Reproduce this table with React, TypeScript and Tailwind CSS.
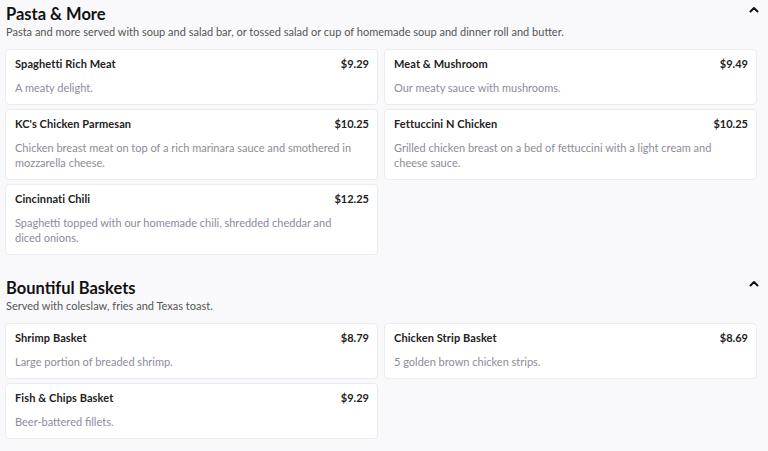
import React from 'react';

interface MenuItem {
    name: string;
    price: string;
    description: string;
}

interface MenuSection {
    title: string;
    subtitle: string;
    items: MenuItem[];
}

const sections: MenuSection[] = [
    {
        title: 'Pasta & More',
        subtitle: 'Pasta and more served with soup and salad bar, or tossed salad or cup of homemade soup and dinner roll and butter.',
        items: [
            { name: 'Spaghetti Rich Meat', price: '$9.29', description: 'A meaty delight.' },
            { name: 'Meat & Mushroom', price: '$9.49', description: 'Our meaty sauce with mushrooms.' },
            { name: "KC's Chicken Parmesan", price: '$10.25', description: 'Chicken breast meat on top of a rich marinara sauce and smothered in mozzarella cheese.' },
            { name: 'Fettuccini N Chicken', price: '$10.25', description: 'Grilled chicken breast on a bed of fettuccini with a light cream and cheese sauce.' },
            { name: 'Cincinnati Chili', price: '$12.25', description: 'Spaghetti topped with our homemade chili, shredded cheddar and diced onions.' },
        ],
    },
    {
        title: 'Bountiful Baskets',
        subtitle: 'Served with coleslaw, fries and Texas toast.',
        items: [
            { name: 'Shrimp Basket', price: '$8.79', description: 'Large portion of breaded shrimp.' },
            { name: 'Chicken Strip Basket', price: '$8.69', description: '5 golden brown chicken strips.' },
            { name: 'Fish & Chips Basket', price: '$9.29', description: 'Beer-battered fillets.' },
        ],
    },
];

const ChevronUp: React.FC = () => (
    <svg width="10" height="8" viewBox="0 0 10 8" fill="none" className="mt-[2px] -mr-[2px]">
        <path d="M1.5 5.5L5 2L8.5 5.5" stroke="#111" strokeWidth="2" strokeLinecap="round" strokeLinejoin="round" />
    </svg>
);

const ItemCard: React.FC<{ item: MenuItem }> = ({ item }) => (
    <div className="bg-white border border-[#ebebf2] rounded-[4px] pl-[9px] pr-[8px] pt-[8px] pb-[9px]">
        <div className="flex justify-between items-center leading-[12px]">
            <span className="text-[11px] font-bold text-[#222] tracking-[0.1px]">{item.name}</span>
            <span className="text-[11px] font-bold text-[#222]">{item.price}</span>
        </div>
        <p className="mt-[10px] text-[11px] leading-[15px] text-[#8d8b9c] pr-[12px]">{item.description}</p>
    </div>
);

const Section: React.FC<{ section: MenuSection }> = ({ section }) => (
    <section>
        <div className="flex justify-between items-start pl-[1px]">
            <h2 className="text-[16.5px] leading-[20px] font-bold text-[#111]">{section.title}</h2>
            <ChevronUp />
        </div>
        <p className="pl-[1px] text-[11px] leading-[16px] text-[#555]">{section.subtitle}</p>
        <div className="mt-[9px] grid grid-cols-2 gap-x-[6px] gap-y-[4px]">
            {section.items.map((item) => (
                <ItemCard key={item.name} item={item} />
            ))}
        </div>
    </section>
);

export default function App() {
    return (
        <div className="min-h-screen bg-[#f9f9fb] pt-[4px] pl-[5px] pr-[11px] pb-6" style={{ fontFamily: 'Lato, "Noto Sans", sans-serif' }}>
            <div className="flex flex-col gap-[23px]">
                {sections.map((section) => (
                    <Section key={section.title} section={section} />
                ))}
            </div>
        </div>
    );
}
